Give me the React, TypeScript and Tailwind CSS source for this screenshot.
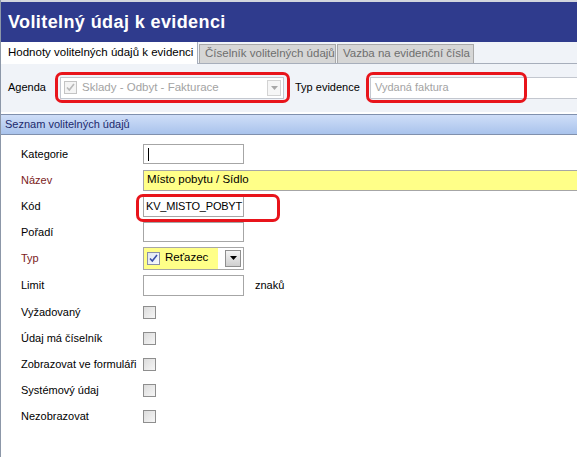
import React from 'react';

const font = { fontFamily: '"Liberation Sans", Arial, sans-serif' };

const Checkbox: React.FC<{ checked?: boolean; disabled?: boolean }> = ({ checked, disabled }) => (
  <div
    className={`w-[13px] h-[13px] border flex items-center justify-center shrink-0 ${
      disabled
        ? 'border-[#c4c4c4] bg-[#f4f4f4]'
        : checked
        ? 'border-[#8a8fa8] bg-gradient-to-br from-[#dfe6f3] to-[#f7f9fd]'
        : 'border-[#8e8e8e] bg-gradient-to-br from-[#dcdcdc] to-[#f6f6f6]'
    }`}
  >
    {checked && (
      <svg width="11" height="11" viewBox="0 0 11 11">
        <path
          d="M2 5.5 L4.3 8 L9 2"
          fill="none"
          stroke={disabled ? '#b8b8b8' : '#3a4fa8'}
          strokeWidth="1.6"
        />
      </svg>
    )}
  </div>
);

const Highlight: React.FC<{ className: string }> = ({ className }) => (
  <div className={`absolute border-[3px] border-[#e8141b] rounded-[7px] pointer-events-none ${className}`} />
);

type Row = { label: string; red?: boolean; kind: 'text' | 'yellow' | 'code' | 'combo' | 'limit' | 'check'; value?: string };

const ROWS: Row[] = [
  { label: 'Kategorie', kind: 'text', value: 'caret' },
  { label: 'Název', red: true, kind: 'yellow', value: 'Místo pobytu / Sídlo' },
  { label: 'Kód', kind: 'code', value: 'KV_MISTO_POBYT' },
  { label: 'Pořadí', kind: 'text' },
  { label: 'Typ', red: true, kind: 'combo', value: 'Reťazec' },
  { label: 'Limit', kind: 'limit' },
  { label: 'Vyžadovaný', kind: 'check' },
  { label: 'Údaj má číselník', kind: 'check' },
  { label: 'Zobrazovat ve formuláři', kind: 'check' },
  { label: 'Systémový údaj', kind: 'check' },
  { label: 'Nezobrazovat', kind: 'check' },
];

const Field: React.FC<{ row: Row }> = ({ row }) => {
  switch (row.kind) {
    case 'text':
      return (
        <div className="w-[101px] h-[20px] border border-[#a6a6a6] bg-white flex items-center px-[4px]">
          {row.value === 'caret' && <div className="w-px h-[13px] bg-black" />}
        </div>
      );
    case 'yellow':
      return (
        <div className="flex-1 h-[21px] border border-[#a6a6a6] border-r-0 bg-[#ffff88] flex items-center px-[3px] text-black text-[11.5px]">
          {row.value}
        </div>
      );
    case 'code':
      return (
        <div className="w-[101px] h-[21px] border border-[#a6a6a6] bg-white flex items-center pl-[2px] overflow-hidden whitespace-nowrap text-black text-[11px] tracking-[-0.2px]">
          {row.value}
        </div>
      );
    case 'combo':
      return (
        <div className="w-[101px] h-[23px] border border-[#a6a6a6] bg-white flex items-center">
          <div className="w-[74px] h-full bg-[#ffff88] flex items-center pl-[3px] gap-[5px] text-black text-[11.5px]">
            <Checkbox checked />
            <span>{row.value}</span>
          </div>
          <div className="flex-1" />
          <div className="w-[16px] h-[17px] mr-[2px] border border-[#8f8f8f] bg-gradient-to-b from-[#f4f4f4] to-[#cfcfcf] flex items-center justify-center">
            <svg width="7" height="4" viewBox="0 0 7 4">
              <path d="M0 0 H7 L3.5 4 Z" fill="#000" />
            </svg>
          </div>
        </div>
      );
    case 'limit':
      return (
        <div className="flex items-center gap-[11px]">
          <div className="w-[101px] h-[21px] border border-[#a6a6a6] bg-white" />
          <span className="text-black">znaků</span>
        </div>
      );
    default:
      return <Checkbox />;
  }
};

export default function App() {
  return (
    <div className="w-[577px] h-[457px] overflow-hidden bg-white relative text-[11px]" style={font}>
      <div className="h-full border-l border-[#8c97a8] flex flex-col">
        {/* Title */}
        <div className="h-[42px] shrink-0 border-t-2 border-[#d3d6de] bg-[#2f3b8d] flex items-center pl-[7px]">
          <h1 className="text-white font-bold text-[18px] leading-none tracking-[0.4px]">Volitelný údaj k evidenci</h1>
        </div>

        {/* Tabs */}
        <div className="h-[22px] shrink-0 flex items-end bg-[#f0f3f8] border-b border-[#a7aebb]">
          <div className="h-[22px] w-[197px] bg-white border-r border-[#a7aebb] flex items-center pl-[7px] text-black relative top-px text-[11.5px]">
            Hodnoty volitelných údajů k evidenci
          </div>
          <div className="h-[19px] w-[137px] ml-[1px] bg-[#d6d6d6] border border-b-0 border-[#a9a9a9] flex items-center pl-[5px] text-[#6e6e6e] text-[11.5px]">
            Číselník volitelných údajů
          </div>
          <div className="h-[19px] w-[137px] ml-[1px] bg-[#d6d6d6] border border-b-0 border-[#a9a9a9] flex items-center pl-[5px] text-[#6e6e6e] text-[11.5px]">
            Vazba na evidenční čísla
          </div>
        </div>

        {/* Agenda row */}
        <div className="h-[48px] shrink-0 bg-[#f0f3f8] flex items-center pl-[7px] pb-[1px]">
          <span className="text-black w-[52px]">Agenda</span>
          <div className="w-[224px] h-[22px] border border-[#c3c7cf] bg-white flex items-center pl-[3px] pr-[2px]">
            <Checkbox checked disabled />
            <span className="ml-[5px] text-[#a3a3a3] flex-1 text-[11.5px]">Sklady - Odbyt - Fakturace</span>
            <div className="w-[14px] h-[16px] border border-[#d3d3d3] bg-[#f6f6f6] flex items-center justify-center">
              <svg width="7" height="4" viewBox="0 0 7 4">
                <path d="M0 0 H7 L3.5 4 Z" fill="#a8a8a8" />
              </svg>
            </div>
          </div>
          <span className="text-black ml-[11px] w-[75px]">Typ evidence</span>
          <div className="flex-1 h-[22px] border border-r-0 border-[#c3c7cf] bg-white flex items-center pl-[4px] text-[#a3a3a3]">
            Vydaná faktura
          </div>
        </div>

        {/* Section header */}
        <div className="h-[21px] shrink-0 mt-[2px] border-y border-[#8090ad] bg-gradient-to-b from-[#cfdef8] to-[#a9c3ec] flex items-center pl-[4px] text-[#1c2a6c]">
          Seznam volitelných údajů
        </div>

        {/* Form */}
        <div className="flex flex-col pt-[6px] pl-[20px]">
          {ROWS.map((row, i) => (
            <div key={row.label} className={`flex items-center ${i === 5 ? 'h-[28px]' : 'h-[26px]'}`}>
              <span className={`w-[122px] shrink-0 ${row.red ? 'text-[#7b1c1c]' : 'text-black'}`}>{row.label}</span>
              <Field row={row} />
            </div>
          ))}
        </div>
      </div>

      {/* annotation highlights */}
      <Highlight className="left-[55px] top-[72px] w-[235px] h-[31px]" />
      <Highlight className="left-[366px] top-[72px] w-[161px] h-[31px]" />
      <Highlight className="left-[136px] top-[194px] w-[144px] h-[28px]" />
    </div>
  );
}
